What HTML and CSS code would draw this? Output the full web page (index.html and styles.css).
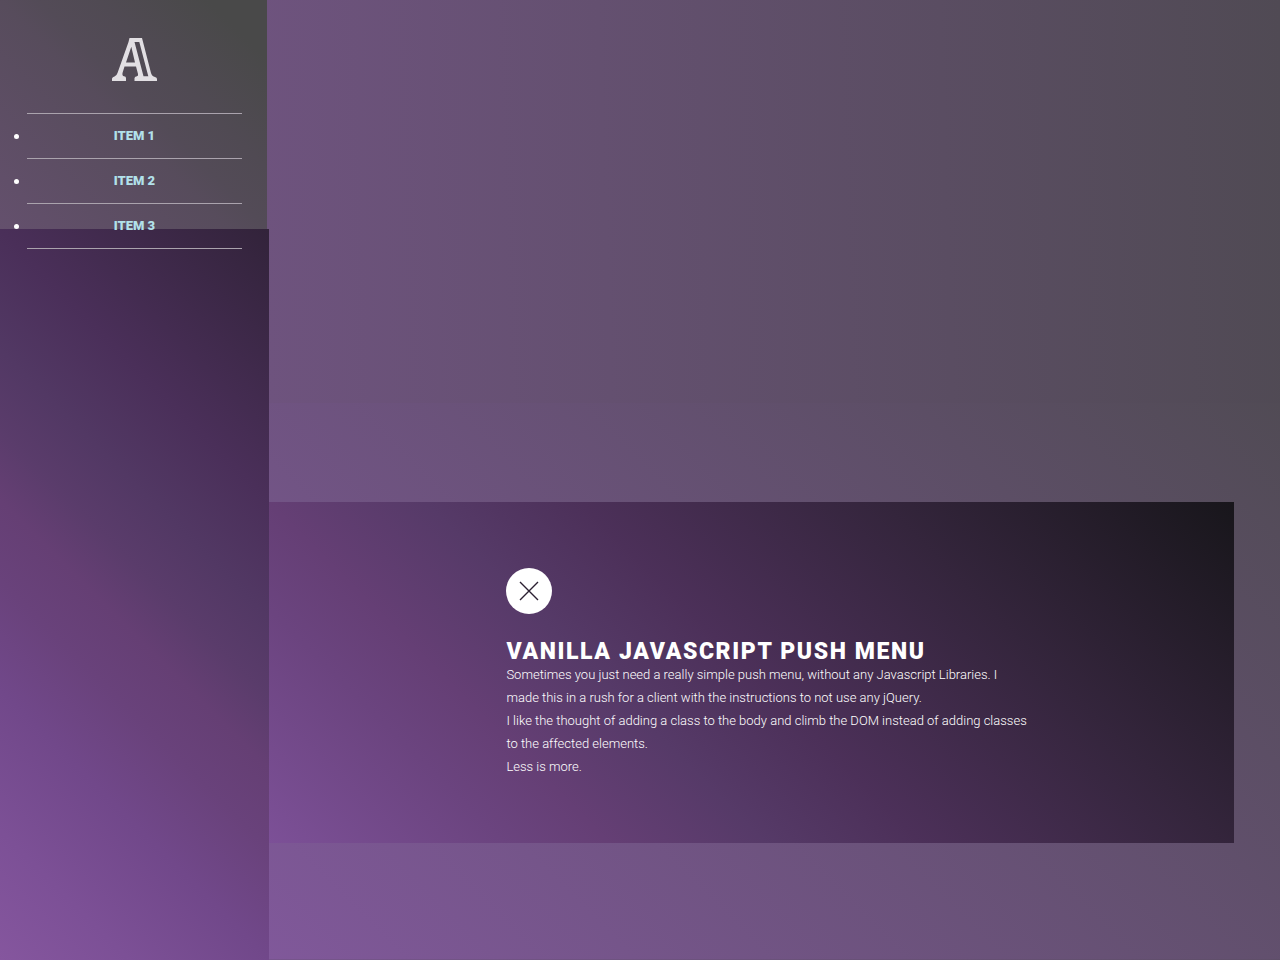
FILE: index.html
```html
<!DOCTYPE html>
<html lang="en">
<head>
<meta charset="utf-8">
<meta name="viewport" content="width=device-width, initial-scale=1">
<title>Vanilla Javascript Push Menu</title>
<link rel="stylesheet" href="styles.css">
</head>
<body>
<div class="layout">
  <nav class="menu" aria-label="Main">
    <svg class="logo" viewBox="0 0 45 43" aria-hidden="true">
      <path fill-rule="evenodd" d="M17.5 0H30L39 35Q40 38.500 43 39Q45 39.500 45 41V43H22.500V40Q23 38.500 25 38.300Q26.500 38 26 36L24 28.500H12.500L10.500 35Q10 38 12 38.300Q14 38.500 14 40V43H0V40.500Q0.500 39 2.500 38.500Q4.500 38 5.500 35L16.500 4Q17 2 17.500 0ZM19.300 8.700L14 24.500H23ZM22.500 4L31.500 38.300H36.300L27.300 4Z"/>
    </svg>
    <ul class="menu-list">
      <li><a href="#item-1">ITEM 1</a></li>
      <li><a href="#item-2">ITEM 2</a></li>
      <li><a href="#item-3">ITEM 3</a></li>
    </ul>
  </nav>
  <main class="main">
    <section class="card">
      <div class="content">
        <button class="toggle" type="button" aria-label="Close menu">
          <svg viewBox="0 0 18 18" aria-hidden="true"><path d="M0 0L18 18M18 0L0 18"/></svg>
        </button>
        <h1>VANILLA JAVASCRIPT PUSH MENU</h1>
        <p>Sometimes you just need a really simple push menu, without any Javascript Libraries. I made this in a rush for a client with the instructions to not use any jQuery.</p>
        <p>I like the thought of adding a class to the body and climb the DOM instead of adding classes to the affected elements.</p>
        <p>Less is more.</p>
      </div>
    </section>
  </main>
</div>
</body>
</html>
```
FILE: styles.css
```css
* {
  box-sizing: border-box;
}

body {
  margin: 0;
  background: #504a53;
  color: #fff;
  font-family: Roboto, "Liberation Sans", sans-serif;
}

.layout {
  display: grid;
  grid-template-columns: 21fr 79fr;
  min-height: 100vh;
}

.menu {
  padding: 38px 10% 0;
  background:
    linear-gradient(45deg, #64506d 0%, #574c5c 46%, #534b57 54%, #504a53 66%, #494949 88%, #494949 100%) 0 0 / calc(100% - 2px) 229px no-repeat,
    linear-gradient(#6d537c, #6d537c) 100% 0 / 2px 229px no-repeat,
    linear-gradient(45deg, #85569e 0%, #7c5096 13%, #71488a 27%, #69427b 38%, #653f74 46%, #5a3c6b 53%, #523864 61%, #4a2f59 73%, #32233a 100%) 0 229px / 100% calc(100% - 229px) no-repeat;
}

.logo {
  display: block;
  width: 45px;
  height: 43px;
  margin: 0 auto 32px;
  fill: #e2dfe3;
}

.menu-list {
  margin: 0;
  padding: 0;
  border-top: 1px solid #aaa3ad;
  font-size: 13px;
  line-height: 44px;
  text-align: center;
  list-style: none;
}

.menu-list li {
  position: relative;
  border-bottom: 1px solid #aaa3ad;
}

.menu-list li::before {
  content: "";
  position: absolute;
  top: 20px;
  right: calc(100% + 8px);
  width: 5px;
  height: 5px;
  border-radius: 50%;
  background: #fff;
}

.menu-list a {
  display: block;
  color: #b2e1ea;
  font-weight: 900;
  text-decoration: none;
}

.main {
  display: flex;
  flex-direction: column;
  justify-content: flex-end;
  padding: 0 46px 117px 0;
  background:
    linear-gradient(88deg, #6e537e, #504a54) 0 0 / 100% 42% no-repeat,
    linear-gradient(45deg, #80589a, #514b55) 0 100% / 100% 58% no-repeat;
}

.card {
  display: flex;
  justify-content: center;
  padding: 66px 0 65px 50px;
  background: linear-gradient(45deg, #7c5097 0%, #6b447f 18%, #653f75 26%, #563a68 38%, #4c3059 50%, #34253c 73%, #18161b 100%);
}

.content {
  width: 59%;
  font-size: 13px;
  font-weight: 300;
  line-height: 23px;
}

.toggle {
  display: flex;
  align-items: center;
  justify-content: center;
  width: 46px;
  height: 46px;
  margin: 0 0 27px;
  padding: 0;
  border: 0;
  border-radius: 50%;
  background: #fff;
}

.toggle svg {
  width: 18px;
  height: 18px;
  overflow: visible;
  fill: none;
  stroke: #2c2032;
  stroke-width: 1.4;
}

h1 {
  margin: 0;
  font-size: 23px;
  font-weight: 900;
  line-height: 22px;
  letter-spacing: 0.07em;
}

p {
  max-width: 523px;
  margin: 0;
}
```
